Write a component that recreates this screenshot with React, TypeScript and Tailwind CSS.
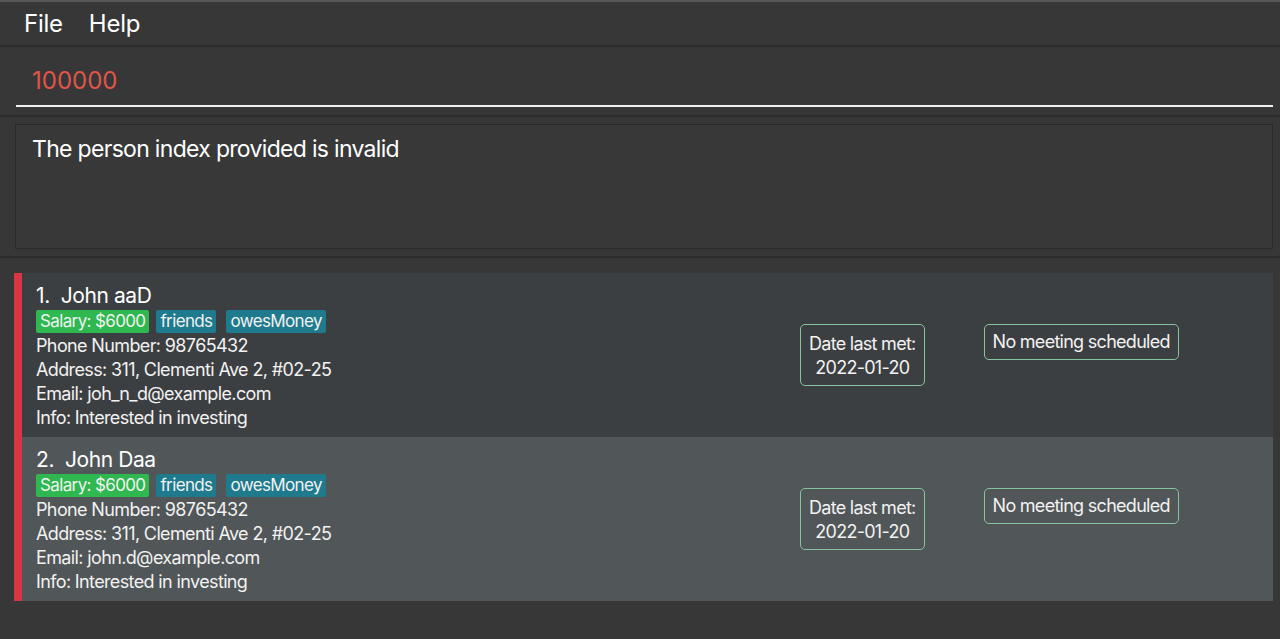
import React from "react";

type Person = {
    name: string;
    email: string;
    bg: string;
};

const people: Person[] = [
    { name: "John aaD", email: "joh_n_d@example.com", bg: "bg-[#3c3f41]" },
    { name: "John Daa", email: "john.d@example.com", bg: "bg-[#515658]" },
];

function PersonCard({ person, index }: { person: Person; index: number }) {
    return (
        <div className={`flex ${person.bg} h-[164px]`}>
            <div className="flex flex-col pl-[14px] pt-[10px] text-[18px] leading-[24px] tracking-[-0.035em] text-[#f2f2f2] w-[778px]">
                <div className="text-[21px] leading-[26px] tracking-[-0.02em] text-white">
                    {index + 1}.&nbsp;&nbsp;{person.name}
                </div>
                <div className="flex mt-[1px] mb-[1px] text-[17px] leading-[23px]">
                    <span className="bg-[#2eb84f] px-[4px] rounded-[2px]">Salary: $6000</span>
                    <span className="bg-[#1f7a8d] px-[4px] rounded-[2px] ml-[7px]">friends</span>
                    <span className="bg-[#1f7a8d] px-[4px] rounded-[2px] ml-[10px]">owesMoney</span>
                </div>
                <div>Phone Number: 98765432</div>
                <div>Address: 311, Clementi Ave 2, #02-25</div>
                <div>Email: {person.email}</div>
                <div>Info: Interested in investing</div>
            </div>
            <div className="flex items-start pt-[51px] gap-[59px] text-[18px] leading-[24px] tracking-[-0.04em] text-[#f2f2f2]">
                <div className="border-[1.5px] border-[#86c4a0] rounded-[5px] px-[8px] pt-[7px] pb-[5px] text-center">
                    <div>Date last met:</div>
                    <div>2022-01-20</div>
                </div>
                <div className="border-[1.5px] border-[#86c4a0] rounded-[5px] px-[8px] py-[5px]">
                    No meeting scheduled
                </div>
            </div>
        </div>
    );
}

export default function App() {
    return (
        <div
            className="h-[639px] bg-[#373737] border-t-2 border-[#575757] flex flex-col overflow-hidden"
            style={{ fontFamily: "Inter, 'Liberation Sans', sans-serif" }}
        >
            <div className="h-[45px] flex items-center gap-[26px] px-[24px] text-[24px] tracking-[-0.01em] text-white border-b-2 border-[#2c2c2c]">
                <span>File</span>
                <span>Help</span>
            </div>

            <div className="h-[70px] pl-[16px] pr-[7px] border-b-2 border-[#2c2c2c]">
                <div className="h-[60px] flex items-center pl-[16px] pt-[10px] border-b-2 border-[#f0f0f0] text-[24px] text-[#e05647]">
                    100000
                </div>
            </div>

            <div className="pt-[7px] pb-[7px] pl-[15px] pr-[7px] border-b-2 border-[#2c2c2c]">
                <div className="h-[125px] border border-[#2a2a2a] bg-[#383838] pl-[16px] pt-[10px] text-[23px] leading-[28px] tracking-[-0.03em] text-white">
                    The person index provided is invalid
                </div>
            </div>

            <div className="pt-[15px] pl-[14px] pr-[7px]">
                <div className="border-l-[8px] border-[#d93644]">
                    {people.map((p, i) => (
                        <PersonCard key={p.name} person={p} index={i} />
                    ))}
                </div>
            </div>
        </div>
    );
}
